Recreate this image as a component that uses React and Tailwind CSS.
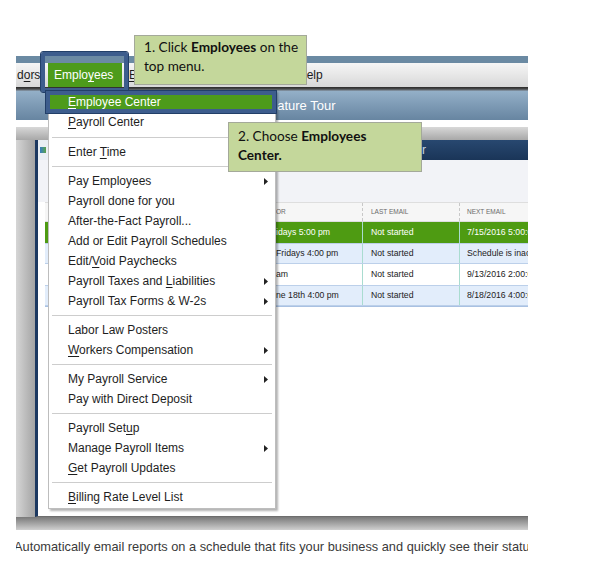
import React from 'react';

function Label({ text }) {
  const i = text.indexOf('_');
  if (i < 0) return <>{text}</>;
  return (
    <>
      {text.slice(0, i)}
      <span className="underline decoration-1 underline-offset-[2px]">{text[i + 1]}</span>
      {text.slice(i + 2)}
    </>
  );
}

const Arrow = () => (
  <svg width="4" height="7" viewBox="0 0 4 7" className="shrink-0">
    <polygon points="0,0 4,3.5 0,7" fill="#222" />
  </svg>
);

const menu = [
  { t: '_Employee Center', hl: true },
  { t: '_Payroll Center' },
  { sep: true, big: true },
  { t: 'Enter _Time' },
  { sep: true },
  { t: 'Pay Employees', sub: true },
  { t: 'Payroll done for you' },
  { t: 'After-the-Fact Payroll...' },
  { t: 'Add or Edit Payroll Schedules' },
  { t: 'Edit/_Void Paychecks' },
  { t: 'Payroll Taxes and _Liabilities', sub: true },
  { t: 'Payroll Tax Forms & W-2s', sub: true },
  { sep: true },
  { t: 'Labor Law Posters' },
  { t: '_Workers Compensation', sub: true },
  { sep: true },
  { t: 'My Payroll Service', sub: true },
  { t: 'Pay with Direct Deposit' },
  { sep: true },
  { t: 'Payroll Set_up' },
  { t: 'Manage Payroll Items', sub: true },
  { t: '_Get Payroll Updates' },
  { sep: true },
  { t: '_Billing Rate Level List' },
];

const rows = [
  { c1: 'idays 5:00 pm', c3: '7/15/2016 5:00:00 PM', kind: 'green' },
  { c1: 'Fridays 4:00 pm', c3: 'Schedule is inactive', kind: 'blue' },
  { c1: 'am', c3: '9/13/2016 2:00:00 AM', kind: 'white' },
  { c1: 'ne 18th 4:00 pm', c3: '8/18/2016 4:00:00 PM', kind: 'blue' },
];

function Row({ r }) {
  const bg =
    r.kind === 'green'
      ? 'bg-[#4e9b12] text-white'
      : r.kind === 'blue'
      ? 'bg-[#e2edfb] text-[#222] border-y border-[#bcd0ea]'
      : 'bg-white text-[#222]';
  return (
    <div className={`h-[21px] grid grid-cols-[317px_97px_1fr] items-stretch text-[8.7px] ${bg}`}>
      <div className="flex items-center pl-[231px] whitespace-nowrap">{r.c1}</div>
      <div className="flex items-center pl-[8px] whitespace-nowrap border-l border-[#a9dcd0]">Not started</div>
      <div className="flex items-center pl-[7px] whitespace-nowrap border-l border-[#a9dcd0]">{r.c3}</div>
    </div>
  );
}

export default function App() {
  return (
    <div className="relative w-[594px] h-[579px] overflow-hidden bg-white font-['Liberation_Sans',Arial,sans-serif] text-[#1b1b1b]">
      <div className="pt-[56px] pl-[16px]">
        <div className="w-[512px] overflow-hidden">
          <div className="h-[7px] bg-[#6b8aa3]" />
          <div className="h-[24px] flex items-stretch bg-linear-to-b from-[#f6f6f6] to-[#d8d8d8] text-[12px] whitespace-nowrap">
            <span className="flex items-center pl-[1px] w-[32px]">
              d<span className="underline underline-offset-[2px]">o</span>rs
            </span>
            <span className="flex items-center bg-[#4d9b1b] text-white w-[74px] pl-[6px]">
              Emplo<span className="underline underline-offset-[2px]">y</span>ees
            </span>
            <span className="flex items-center w-[170px] pl-[7px]">
              <span className="underline underline-offset-[2px]">B</span>anking
            </span>
            <span className="flex items-center pl-[6px]">
              <span className="underline underline-offset-[2px]">H</span>elp
            </span>
          </div>
          <div className="h-[4px] bg-linear-to-b from-[#2a2a2a] via-[#4a4a4a] to-[#8ea2b6]" />
          <div className="h-[29px] flex items-center bg-linear-to-b from-[#94b0c8] to-[#6785a1] text-white text-[13px] pl-[246px]">
            Feature Tour
          </div>
          <div className="h-[7px]" />
          <div className="h-[403px] flex flex-col">
            <div className="h-[13px] bg-linear-to-b from-[#d8d8d8] to-[#a8a8a8]" />
            <div className="flex-1 flex min-h-0">
              <div className="w-[19px] bg-linear-to-r from-[#d6d6d6] to-[#a4a4a4]" />
              <div className="flex-1 flex flex-col bg-white border-l-[3px] border-l-[#1c3860] border-b border-b-[#6e6e6e] min-w-0">
                <div className="h-[20px] shrink-0 flex items-center bg-linear-to-b from-[#284870] to-[#1a3558]">
                  <div className="w-[10px] h-full flex items-center justify-center bg-[#e8eef4]">
                    <div className="w-[6px] h-[6px] bg-linear-to-r from-[#3a7ac0] to-[#5aa040]" />
                  </div>
                  <div className="w-[378px] text-right text-[12px] text-[#c9d5e3] whitespace-nowrap">
                    Scheduled Reports Center
                  </div>
                </div>
                <div className="h-[42px] shrink-0 bg-[#f2f3f7]" />
                <div className="pl-[7px]">
                  <div className="h-[20px] grid grid-cols-[317px_97px_1fr] bg-[#f6f6f6] border-y border-[#dedede] text-[6.5px] text-[#6a6a6a]">
                    <div className="flex items-center pl-[231px] whitespace-nowrap">OR</div>
                    <div className="flex items-center pl-[8px] whitespace-nowrap border-l border-dashed border-[#c8c8c8]">LAST EMAIL</div>
                    <div className="flex items-center pl-[7px] whitespace-nowrap border-l border-dashed border-[#c8c8c8]">NEXT EMAIL</div>
                  </div>
                  {rows.map((r, i) => (
                    <Row key={i} r={r} />
                  ))}
                  <div className="h-[1px] bg-[#a9c1e2]" />
                </div>
              </div>
            </div>
            <div className="h-[13px] bg-linear-to-b from-[#7a7a7a] to-[#d0d0d0]" />
          </div>
        </div>
        <div className="w-[512px] overflow-hidden mt-[10px]">
          <p className="-ml-[2px] text-[12.8px] leading-[14px] text-[#3a3a3a] whitespace-nowrap">
            Automatically email reports on a schedule that fits your business and quickly see their status.
          </p>
        </div>
      </div>

      {/* Employees menu dropdown */}
      <div className="absolute left-[48px] top-[90px] w-[228px] bg-white border border-[#bdbdbd] shadow-[2px_2px_2px_rgba(0,0,0,0.3)] pt-[1px] pb-[1px] text-[12px]">
        {menu.map((m, i) =>
          m.sep ? (
            <div key={i} className={`${m.big ? 'h-[10px]' : 'h-[9px]'} flex items-center px-[3px]`}>
              <div className="h-[1px] w-full bg-[#cdcdcd]" />
            </div>
          ) : (
            <div
              key={i}
              className={`h-[20px] flex items-center justify-between pl-[19px] pr-[7px] whitespace-nowrap ${
                m.hl ? 'bg-[#4d9b1b] text-white' : 'text-[#1e1e1e]'
              }`}
            >
              <span>
                <Label text={m.t} />
              </span>
              {m.sub ? <Arrow /> : null}
            </div>
          )
        )}
      </div>

      {/* highlight frames */}
      <div className="absolute left-[41px] top-[52px] w-[87px] h-[40px] border-4 border-[#3d5d8d] outline outline-1 outline-[#223f68] rounded-[2px]" />
      <div className="absolute left-[46px] top-[91px] w-[230px] h-[22px] border-4 border-[#3d5d8d] outline outline-1 outline-[#223f68]" />

      {/* callouts */}
      <div className="absolute left-[134px] top-[35px] w-[173px] h-[50px] bg-[#c4d79b] border border-[#a4a99a] pl-[9px] pt-[2px] font-['Lato',sans-serif] text-[13.6px] leading-[19px] text-[#111]">
        1. Click <b>Employees</b> on the
        <br />
        top menu.
      </div>
      <div className="absolute left-[228px] top-[122px] w-[194px] h-[50px] bg-[#c4d79b] border border-[#a4a99a] pl-[9px] pt-[4px] font-['Lato',sans-serif] text-[13.6px] leading-[19px] text-[#111]">
        2. Choose <b>Employees</b>
        <br />
        <b>Center.</b>
      </div>
    </div>
  );
}
